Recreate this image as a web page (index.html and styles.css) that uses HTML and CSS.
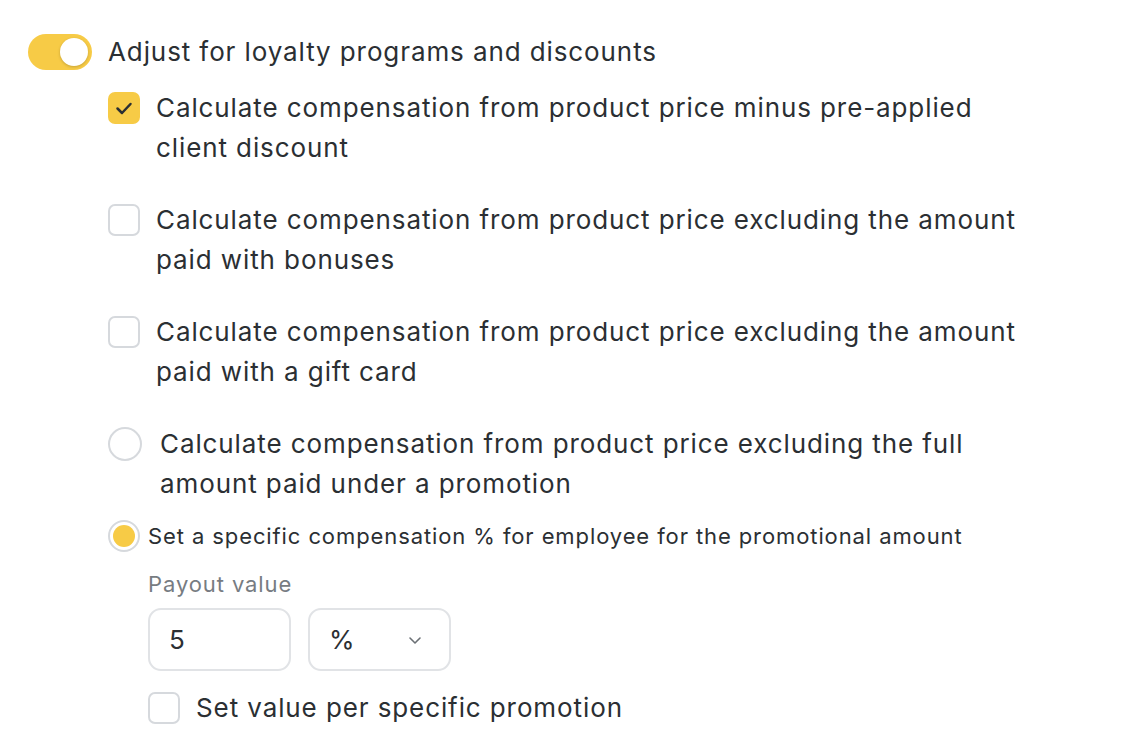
FILE: index.html
```html
<!DOCTYPE html>
<html lang="en">
<head>
    <meta charset="UTF-8">
    <title>Loyalty settings</title>
    <link rel="stylesheet" href="styles.css">
</head>
<body>
<div class="panel">
    <div class="toggle-row">
        <span class="toggle"><span class="knob"></span></span>
        <span class="toggle-label">Adjust for loyalty programs and discounts</span>
    </div>

    <div class="options">
        <div class="option">
            <span class="check checked">
                <svg class="tick" width="28" height="28" viewBox="2 2 28 28"><path d="M9.5 16.5l4.5 4.5 8.5-9" fill="none" stroke="#2b2f33" stroke-width="2.5" stroke-linecap="round" stroke-linejoin="round"/></svg>
            </span>
            <span class="option-text">Calculate compensation from product price minus pre-applied client discount</span>
        </div>
        <div class="option">
            <span class="check"></span>
            <span class="option-text">Calculate compensation from product price excluding the amount paid with bonuses</span>
        </div>
        <div class="option">
            <span class="check"></span>
            <span class="option-text">Calculate compensation from product price excluding the amount paid with a gift card</span>
        </div>
        <div class="option radio-option">
            <span class="radio"></span>
            <span class="option-text">Calculate compensation from product price excluding the full amount paid under a promotion</span>
        </div>
        <div class="option small-option">
            <span class="radio selected"><span class="dot"></span></span>
            <span class="small-text">Set a specific compensation % for employee for the promotional amount</span>
        </div>

        <div class="payout">
            <div class="payout-label">Payout value</div>
            <div class="fields">
                <div class="field">5</div>
                <div class="field select">
                    <span>%</span>
                    <svg class="chevron" width="16" height="16" viewBox="0 0 16 16"><path d="M3 6l5 5 5-5" fill="none" stroke="#6b7075" stroke-width="1.6" stroke-linecap="round" stroke-linejoin="round"/></svg>
                </div>
            </div>
            <div class="option per-promo">
                <span class="check"></span>
                <span class="option-text">Set value per specific promotion</span>
            </div>
        </div>
    </div>
</div>
</body>
</html>
```
FILE: styles.css
```css
body{
    margin: 0;
    background: #fff;
    font-family: Inter, "Noto Sans", sans-serif;
    color: #2b2f33;
    letter-spacing: 0.9px;
}
.panel{
    padding: 32px 0 0 28px;
}
.toggle-row{
    display: flex;
    align-items: center;
    gap: 16px;
}
.toggle{
    width: 64px;
    height: 36px;
    border-radius: 18px;
    background: #f7cb46;
    display: flex;
    align-items: center;
    justify-content: flex-end;
    padding-right: 4px;
    box-sizing: border-box;
}
.knob{
    width: 28px;
    height: 28px;
    border-radius: 50%;
    background: #fff;
    box-shadow: 0 1px 3px rgba(0,0,0,0.2);
}
.toggle-label,.option-text{
    font-size: 26px;
    line-height: 40px;
}
.options{
    margin: 16px 0 0 80px;
    display: flex;
    flex-direction: column;
    gap: 32px;
}
.option{
    display: flex;
    align-items: flex-start;
    gap: 16px;
}
.option-text{
    max-width: 880px;
}
.check{
    width: 32px;
    height: 32px;
    margin-top: 4px;
    box-sizing: border-box;
    border: 2px solid #d6d9dd;
    border-radius: 7px;
    flex-shrink: 0;
    display: flex;
    align-items: center;
    justify-content: center;
}
.check.checked{
    background: #f7cb46;
    border-color: #f7cb46;
}
.tick,.chevron{
    display: block;
    flex-shrink: 0;
}
.radio{
    width: 34px;
    height: 34px;
    margin-top: 3px;
    box-sizing: border-box;
    border: 2px solid #d6d9dd;
    border-radius: 50%;
    flex-shrink: 0;
    display: flex;
    align-items: center;
    justify-content: center;
}
.radio-option{
    gap: 18px;
}
.small-option{
    margin-top: -16px;
    align-items: center;
    gap: 8px;
}
.radio.selected{
    width: 32px;
    height: 32px;
    margin-top: 0;
}
.dot{
    width: 22px;
    height: 22px;
    border-radius: 50%;
    background: #f7cb46;
}
.small-text{
    font-size: 22px;
    line-height: 32px;
}
.payout{
    margin: -16px 0 0 40px;
}
.payout-label{
    font-size: 22px;
    line-height: 32px;
    color: #777c82;
}
.fields{
    display: flex;
    gap: 17px;
    margin-top: 8px;
}
.field{
    width: 143px;
    height: 63px;
    box-sizing: border-box;
    border: 2px solid #e1e3e6;
    border-radius: 13px;
    font-size: 26px;
    line-height: 59px;
    padding: 0 19px;
}
.select{
    display: flex;
    align-items: center;
    justify-content: space-between;
    padding-right: 26px;
}
.per-promo{
    margin-top: 17px;
}
```
